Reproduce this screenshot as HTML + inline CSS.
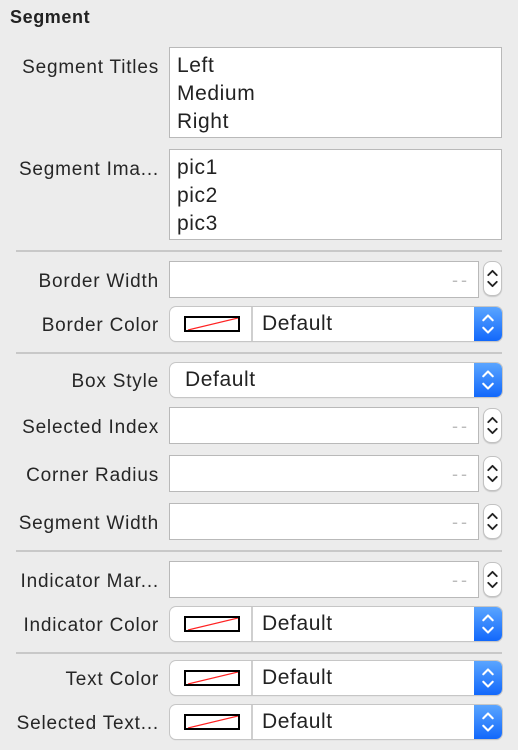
<!DOCTYPE html>
<html><head><style>
body{margin:0;width:518px;height:750px;background:#ececec;font-family:"Liberation Sans",sans-serif;color:#222;position:relative;overflow:hidden}
.a{position:absolute}
.t{left:10px;top:7px;font-weight:bold;font-size:18px;letter-spacing:0.6px}
.l{position:absolute;right:359px;font-size:19px;letter-spacing:0.8px;white-space:nowrap;color:#262626;margin-top:2px}
.ta{position:absolute;left:169px;width:333px;height:91px;background:#fff;border:1px solid #b9b9b9;box-sizing:border-box;font-size:21px;letter-spacing:0.6px;line-height:28px;padding:4px 0 0 7px}
.sep{position:absolute;left:16px;width:486px;height:2px;background:#c8c8c8}
.f{position:absolute;left:169px;width:310px;height:37px;background:#fff;border:1px solid #b9b9b9;box-sizing:border-box}
.f:after{content:"--";position:absolute;right:8px;top:8px;color:#bbb;font-size:18px;letter-spacing:3px}
.st{position:absolute;left:483px;width:19px;height:35px;background:#fff;border:1px solid #c2c2c2;border-radius:8px;box-sizing:border-box;box-shadow:0 1px 1px rgba(0,0,0,.15)}
.p{position:absolute;left:170px;width:332px;height:34px;background:#fff;border-radius:6px;box-shadow:0 0 0 1px #c6c6c6,0 1px 1px rgba(0,0,0,.2);overflow:hidden;font-size:21px;letter-spacing:0.6px}
.p .b{position:absolute;right:0;top:0;width:28px;height:34px;background:linear-gradient(#5aa5ff,#1268fb)}
.p .d{position:absolute;top:5px}
.p .dv{position:absolute;left:81px;top:0;width:2px;height:34px;background:#cfcfcf}
.sw{position:absolute;left:14px;top:9px;width:56px;height:16px;border:2px solid #000;box-sizing:border-box;overflow:hidden}
.sw svg{display:block}
</style></head><body>
<div class="a t">Segment</div>

<div class="l" style="top:55px">Segment Titles</div>
<div class="ta" style="top:47px">Left<br>Medium<br>Right</div>
<div class="l" style="top:157px">Segment Ima...</div>
<div class="ta" style="top:149px">pic1<br>pic2<br>pic3</div>
<div class="sep" style="top:250px"></div>

<div class="l" style="top:269px">Border Width</div>
<div class="f" style="top:261px"></div>
<div class="l" style="top:313px">Border Color</div>
<div class="sep" style="top:352px"></div>
<div class="l" style="top:369px">Box Style</div>
<div class="l" style="top:415px">Selected Index</div>
<div class="f" style="top:407px"></div>
<div class="l" style="top:463px">Corner Radius</div>
<div class="f" style="top:455px"></div>
<div class="l" style="top:511px">Segment Width</div>
<div class="f" style="top:503px"></div>
<div class="sep" style="top:550px"></div>
<div class="l" style="top:569px">Indicator Mar...</div>
<div class="f" style="top:561px"></div>
<div class="l" style="top:613px">Indicator Color</div>
<div class="sep" style="top:652px"></div>
<div class="l" style="top:667px">Text Color</div>
<div class="l" style="top:711px">Selected Text...</div>

<svg width="0" height="0" style="position:absolute"><defs>
<symbol id="arr" viewBox="0 0 20 36"><path d="M5 14 L10 9 L15 14 M5 22 L10 27 L15 22" fill="none" stroke="currentColor" stroke-width="2.2" stroke-linecap="round" stroke-linejoin="round"/></symbol>
</defs></svg>

<div class="st" style="top:261px"><svg width="17" height="33" style="color:#222"><use href="#arr"/></svg></div>
<div class="st" style="top:408px"><svg width="17" height="33" style="color:#222"><use href="#arr"/></svg></div>
<div class="st" style="top:456px"><svg width="17" height="33" style="color:#222"><use href="#arr"/></svg></div>
<div class="st" style="top:504px"><svg width="17" height="33" style="color:#222"><use href="#arr"/></svg></div>
<div class="st" style="top:562px"><svg width="17" height="33" style="color:#222"><use href="#arr"/></svg></div>

<div class="p" style="top:307px"><div class="sw"><svg width="52" height="12"><line x1="2" y1="12" x2="52" y2="0" stroke="#f22" stroke-width="1.2"/></svg></div><div class="dv"></div><div class="d" style="left:92px">Default</div><div class="b"><svg width="28" height="34" style="color:#fff"><use href="#arr"/></svg></div></div>
<div class="p" style="top:363px"><div class="d" style="left:15px">Default</div><div class="b"><svg width="28" height="34" style="color:#fff"><use href="#arr"/></svg></div></div>
<div class="p" style="top:607px"><div class="sw"><svg width="52" height="12"><line x1="2" y1="12" x2="52" y2="0" stroke="#f22" stroke-width="1.2"/></svg></div><div class="dv"></div><div class="d" style="left:92px">Default</div><div class="b"><svg width="28" height="34" style="color:#fff"><use href="#arr"/></svg></div></div>
<div class="p" style="top:661px"><div class="sw"><svg width="52" height="12"><line x1="2" y1="12" x2="52" y2="0" stroke="#f22" stroke-width="1.2"/></svg></div><div class="dv"></div><div class="d" style="left:92px">Default</div><div class="b"><svg width="28" height="34" style="color:#fff"><use href="#arr"/></svg></div></div>
<div class="p" style="top:705px"><div class="sw"><svg width="52" height="12"><line x1="2" y1="12" x2="52" y2="0" stroke="#f22" stroke-width="1.2"/></svg></div><div class="dv"></div><div class="d" style="left:92px">Default</div><div class="b"><svg width="28" height="34" style="color:#fff"><use href="#arr"/></svg></div></div>
</body></html>
